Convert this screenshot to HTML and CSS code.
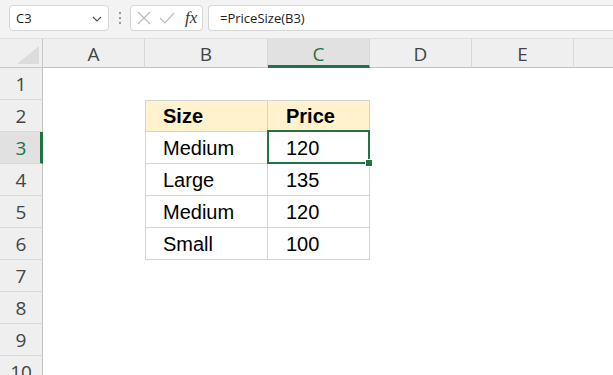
FILE: index.html
```html
<!DOCTYPE html>
<html lang="en">
<head>
  <meta charset="UTF-8">
  <title>PriceSize</title>
  <link rel="stylesheet" href="styles.css">
</head>
<body>
  <!-- formula bar -->
  <div class="toolbar">
    <div class="namebox">
      <span>C3</span>
      <svg class="chev" width="10" height="6" viewBox="0 0 10 6"><polyline points="1,1 5,5 9,1" fill="none" stroke="#555" stroke-width="1.2"/></svg>
    </div>
    <div class="dots"><i></i><i></i><i></i></div>
    <div class="fxbox">
      <svg width="14" height="14" viewBox="0 0 14 14"><path d="M1 1 L13 13 M13 1 L1 13" stroke="#bcbcbc" stroke-width="1.2" fill="none"/></svg>
      <svg width="16" height="13" viewBox="0 0 16 13"><polyline points="1,6 6,11 15,1" stroke="#bcbcbc" stroke-width="1.2" fill="none"/></svg>
      <span class="fx">fx</span>
    </div>
    <div class="formula">=PriceSize(B3)</div>
  </div>

  <!-- sheet -->
  <div class="sheet">
    <div class="corner"><span class="tri"></span></div>
    <div class="colhead">A</div>
    <div class="colhead">B</div>
    <div class="colhead active">C</div>
    <div class="colhead">D</div>
    <div class="colhead">E</div>
    <div class="colhead last"></div>

    <div class="rowhead">1</div>
    <div class="cell"></div><div class="cell"></div><div class="cell"></div><div class="cell"></div><div class="cell"></div><div class="cell"></div>

    <div class="rowhead">2</div>
    <div class="cell"></div>
    <div class="cell t th first top">Size</div>
    <div class="cell t th top">Price</div>
    <div class="cell"></div><div class="cell"></div><div class="cell"></div>

    <div class="rowhead active">3</div>
    <div class="cell"></div>
    <div class="cell t first">Medium</div>
    <div class="cell t selected">120</div>
    <div class="cell"></div><div class="cell"></div><div class="cell"></div>

    <div class="rowhead">4</div>
    <div class="cell"></div>
    <div class="cell t first">Large</div>
    <div class="cell t">135</div>
    <div class="cell"></div><div class="cell"></div><div class="cell"></div>

    <div class="rowhead">5</div>
    <div class="cell"></div>
    <div class="cell t first">Medium</div>
    <div class="cell t">120</div>
    <div class="cell"></div><div class="cell"></div><div class="cell"></div>

    <div class="rowhead">6</div>
    <div class="cell"></div>
    <div class="cell t first">Small</div>
    <div class="cell t">100</div>
    <div class="cell"></div><div class="cell"></div><div class="cell"></div>

    <div class="rowhead">7</div>
    <div class="cell"></div><div class="cell"></div><div class="cell"></div><div class="cell"></div><div class="cell"></div><div class="cell"></div>
    <div class="rowhead">8</div>
    <div class="cell"></div><div class="cell"></div><div class="cell"></div><div class="cell"></div><div class="cell"></div><div class="cell"></div>
    <div class="rowhead">9</div>
    <div class="cell"></div><div class="cell"></div><div class="cell"></div><div class="cell"></div><div class="cell"></div><div class="cell"></div>
    <div class="rowhead">10</div>
    <div class="cell"></div><div class="cell"></div><div class="cell"></div><div class="cell"></div><div class="cell"></div><div class="cell"></div>
  </div>
</body>
</html>
```

FILE: styles.css
```css
body {
  margin: 0;
  font-family: 'Open Sans', 'Noto Sans', sans-serif;
  background: #fff;
  overflow: hidden;
  width: 613px;
  height: 375px;
}

/* formula bar */
.toolbar {
  display: flex;
  align-items: flex-start;
  height: 38px;
  box-sizing: border-box;
  padding: 5px 0 0 9px;
  background: #f3f3f3;
}

.namebox {
  width: 100px;
  height: 26px;
  box-sizing: border-box;
  border: 1px solid #d6d6d6;
  border-radius: 4px;
  background: #fff;
  display: flex;
  align-items: center;
  justify-content: space-between;
  padding: 0 6px 0 6px;
  font-size: 13px;
  color: #222;
}

.namebox .chev {
  margin-top: 1px;
}

.dots {
  width: 21px;
  height: 26px;
  display: flex;
  flex-direction: column;
  align-items: center;
  justify-content: center;
  gap: 3px;
}

.dots i {
  display: block;
  width: 2px;
  height: 2px;
  background: #9a9a9a;
}

.fxbox {
  width: 73px;
  height: 26px;
  box-sizing: border-box;
  border: 1px solid #d6d6d6;
  border-radius: 4px;
  background: #fff;
  display: flex;
  align-items: center;
  gap: 8px;
  padding-left: 6px;
}

.fxbox .fx {
  font-family: 'Liberation Serif', serif;
  font-style: italic;
  font-size: 17px;
  color: #333;
  margin-left: 2px;
}

.formula {
  flex: 1;
  height: 26px;
  box-sizing: border-box;
  margin-left: 5px;
  border: 1px solid #d6d6d6;
  border-right: none;
  border-radius: 4px 0 0 4px;
  background: #fff;
  padding-left: 11px;
  font-size: 13px;
  line-height: 24px;
  color: #222;
}

/* sheet grid */
.sheet {
  display: grid;
  grid-template-columns: 43px 102px 123px 102px 102px 102px 1fr;
  grid-template-rows: 30px repeat(10, 32px);
}

.corner {
  background: #efefef;
  border-right: 1px solid #c8c8c8;
  border-bottom: 1px solid #c8c8c8;
  border-top: 1px solid #e0e0e0;
  position: relative;
}

.corner .tri {
  position: absolute;
  right: 3px;
  bottom: 3px;
  width: 22px;
  height: 18px;
  background: #dcdcdc;
  clip-path: polygon(100% 0, 100% 100%, 0 100%);
}

.colhead {
  background: #efefef;
  border-top: 1px solid #e0e0e0;
  border-right: 1px solid #d8d8d8;
  border-bottom: 1px solid #c2c2c2;
  display: flex;
  align-items: center;
  justify-content: center;
  font-size: 19px;
  color: #444;
  padding-top: 2px;
  box-sizing: border-box;
}

.colhead.last {
  border-right: none;
}

.colhead.active {
  background: #e1e1e1;
  color: #217346;
  border-bottom: 3px solid #217346;
  padding-top: 4px;
}

.rowhead {
  background: #efefef;
  border-right: 1px solid #c2c2c2;
  border-bottom: 1px solid #d8d8d8;
  display: flex;
  align-items: center;
  justify-content: center;
  font-size: 19px;
  color: #444;
  box-sizing: border-box;
}

.rowhead.active {
  background: #e1e1e1;
  color: #217346;
  border-right: 3px solid #217346;
  padding-left: 2px;
}

.cell {
  background: #fff;
  box-sizing: border-box;
}

/* data table */
.cell.t {
  border-right: 1px solid #d4d4d4;
  border-bottom: 1px solid #d4d4d4;
  font-family: 'Liberation Sans', Arial, sans-serif;
  font-size: 20px;
  color: #000;
  padding-left: 18px;
  line-height: 31px;
  padding-top: 1px;
}

.cell.first {
  border-left: 1px solid #d4d4d4;
  padding-left: 17px;
}

.cell.top {
  border-top: 1px solid #d4d4d4;
  padding-top: 0;
  line-height: 31px;
}

.cell.th {
  background: #fff2cc;
  font-weight: bold;
}

.cell.selected {
  position: relative;
}

.cell.selected::after {
  content: '';
  position: absolute;
  left: -1px;
  top: -2px;
  right: -1px;
  bottom: -1px;
  border: 2px solid #217346;
}

.cell.selected::before {
  content: '';
  position: absolute;
  right: -4px;
  bottom: -4px;
  width: 6px;
  height: 6px;
  background: #217346;
  border: 1px solid #fff;
  z-index: 1;
}
```
